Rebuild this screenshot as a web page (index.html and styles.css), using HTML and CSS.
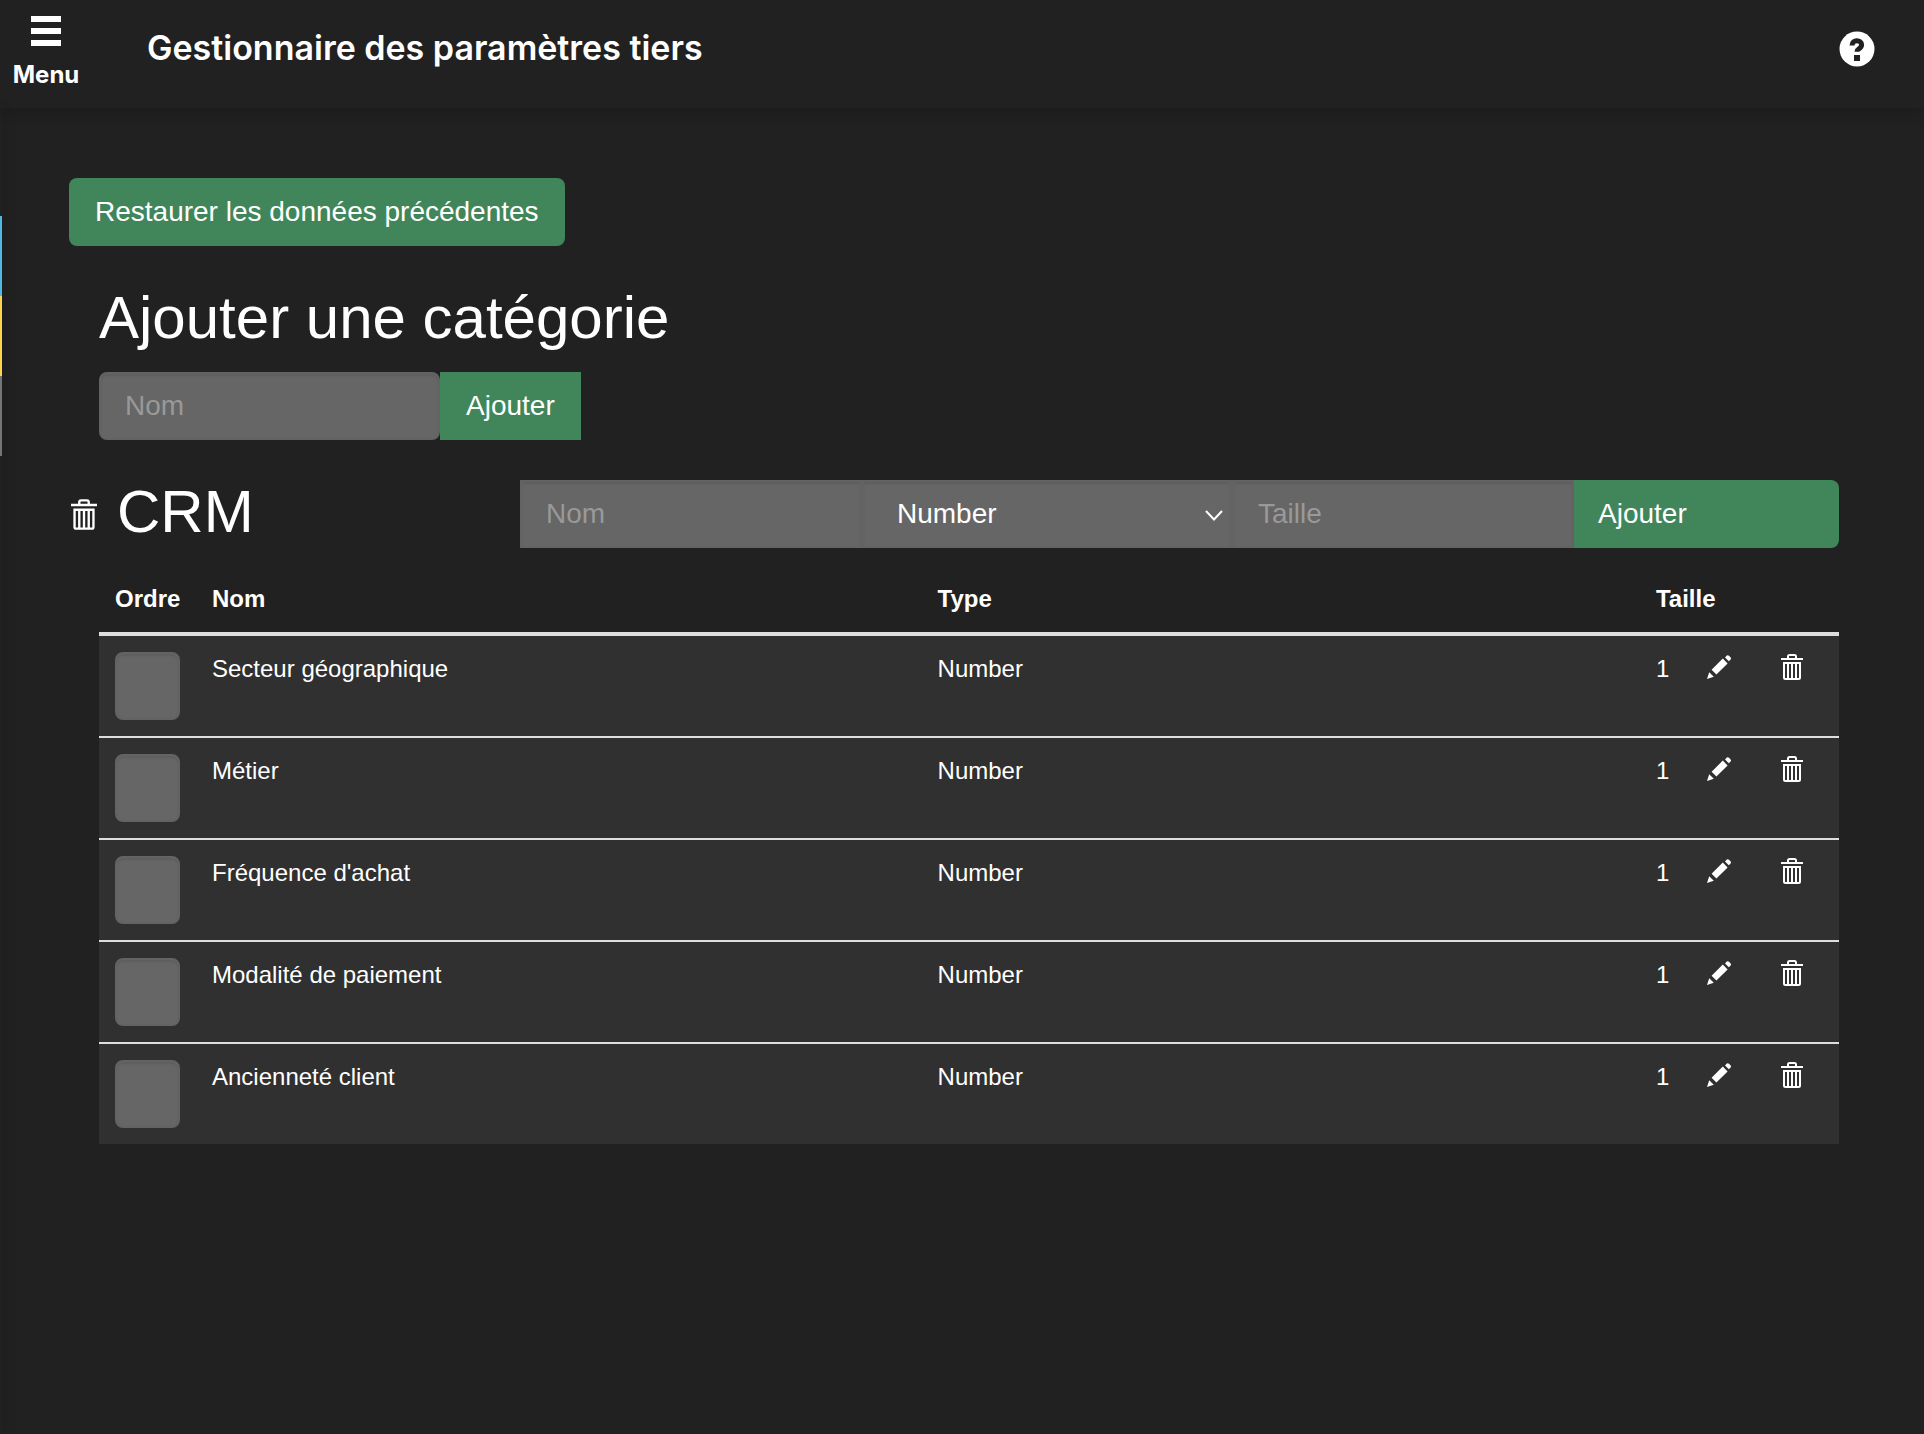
FILE: index.html
```html
<!DOCTYPE html>
<html lang="fr">
<head>
<meta charset="utf-8">
<meta name="viewport" content="width=device-width, initial-scale=1">
<title>Gestionnaire des paramètres tiers</title>
<link rel="stylesheet" href="styles.css">
</head>
<body>
<svg class="sprite" aria-hidden="true">
  <symbol id="trash" viewBox="0 0 22 26">
    <path d="M7 4V2.500Q7 1 8.500 1h5Q15 1 15 2.500V4M0 5h22M3 9h16v14.500q0 1.500-1.500 1.500h-13Q3 25 3 23.500zM7 9v16M11 9v16M15 9v16" fill="none" stroke="currentColor" stroke-width="2"/>
  </symbol>
  <symbol id="pencil" viewBox="0 0 24 24">
    <path d="M18 2.400 19.800.6q1-1 2.200.2l1.400 1.400q1.200 1.200.2 2.200l-1.800 1.800zM15.800 3.600l4.800 4.800L9.400 19.600 4.600 14.800zM2.200 17.200 6.800 21.800 0 24z" fill="currentColor"/>
  </symbol>
</svg>

<header class="topbar">
  <button class="menu" type="button">
    <svg width="30" height="30" viewBox="0 0 30 30" aria-hidden="true"><path d="M0 0h30v6H0zM0 12h30v6H0zM0 24h30v6H0z" fill="currentColor"/></svg>
    <span>Menu</span>
  </button>
  <h1 class="title">Gestionnaire des paramètres tiers</h1>
  <button class="help" type="button" aria-label="Aide">
    <svg width="36" height="36" viewBox="0 0 36 36" aria-hidden="true"><circle cx="18" cy="18" r="17.500" fill="#fff"/><path d="M13 14.500C13 8 22.600 8.300 22.600 13.800c0 4.200-4.600 3.400-4.600 6.900" fill="none" stroke="#212121" stroke-width="5"/><path d="M15 24h6v6h-6z" fill="#212121"/></svg>
  </button>
</header>

<aside class="drawer" aria-hidden="true">
  <div class="tab blue"></div>
  <div class="tab yellow"></div>
  <div class="tab grey"></div>
</aside>

<main class="content">
  <button class="btn rounded" type="button">Restaurer les données précédentes</button>

  <section class="new-category">
    <h2 class="heading">Ajouter une catégorie</h2>
    <form class="inline-form">
      <input class="field rounded" type="text" placeholder="Nom" aria-label="Nom de la catégorie">
      <button class="btn" type="button">Ajouter</button>
    </form>
  </section>

  <section class="category">
    <div class="category-head">
      <button class="icon-btn" type="button" aria-label="Supprimer la catégorie"><svg class="trash-large"><use href="#trash"/></svg></button>
      <h2 class="heading">CRM</h2>
      <form class="param-form">
        <input class="field" type="text" placeholder="Nom" aria-label="Nom">
        <div class="select-wrap">
          <select class="field" aria-label="Type"><option>Number</option></select>
          <svg class="chevron" viewBox="0 0 18 11" aria-hidden="true"><path d="m1 1 8 8.500L17 1" fill="none" stroke="currentColor" stroke-width="2"/></svg>
        </div>
        <input class="field" type="text" placeholder="Taille" aria-label="Taille">
        <button class="btn submit" type="button">Ajouter</button>
      </form>
    </div>

    <table class="params">
      <colgroup><col class="c-order"><col class="c-name"><col class="c-type"><col class="c-size"><col class="c-edit"><col class="c-del"></colgroup>
      <thead>
        <tr><th>Ordre</th><th>Nom</th><th>Type</th><th colspan="3">Taille</th></tr>
      </thead>
      <tbody>
        <tr><td><input class="field rounded order" type="text" aria-label="Ordre"></td><td>Secteur géographique</td><td>Number</td><td>1</td>
          <td><button class="icon-btn" type="button" aria-label="Modifier"><svg class="pencil"><use href="#pencil"/></svg></button></td>
          <td><button class="icon-btn" type="button" aria-label="Supprimer"><svg class="trash"><use href="#trash"/></svg></button></td></tr>
        <tr><td><input class="field rounded order" type="text" aria-label="Ordre"></td><td>Métier</td><td>Number</td><td>1</td>
          <td><button class="icon-btn" type="button" aria-label="Modifier"><svg class="pencil"><use href="#pencil"/></svg></button></td>
          <td><button class="icon-btn" type="button" aria-label="Supprimer"><svg class="trash"><use href="#trash"/></svg></button></td></tr>
        <tr><td><input class="field rounded order" type="text" aria-label="Ordre"></td><td>Fréquence d'achat</td><td>Number</td><td>1</td>
          <td><button class="icon-btn" type="button" aria-label="Modifier"><svg class="pencil"><use href="#pencil"/></svg></button></td>
          <td><button class="icon-btn" type="button" aria-label="Supprimer"><svg class="trash"><use href="#trash"/></svg></button></td></tr>
        <tr><td><input class="field rounded order" type="text" aria-label="Ordre"></td><td>Modalité de paiement</td><td>Number</td><td>1</td>
          <td><button class="icon-btn" type="button" aria-label="Modifier"><svg class="pencil"><use href="#pencil"/></svg></button></td>
          <td><button class="icon-btn" type="button" aria-label="Supprimer"><svg class="trash"><use href="#trash"/></svg></button></td></tr>
        <tr><td><input class="field rounded order" type="text" aria-label="Ordre"></td><td>Ancienneté client</td><td>Number</td><td>1</td>
          <td><button class="icon-btn" type="button" aria-label="Modifier"><svg class="pencil"><use href="#pencil"/></svg></button></td>
          <td><button class="icon-btn" type="button" aria-label="Supprimer"><svg class="trash"><use href="#trash"/></svg></button></td></tr>
      </tbody>
    </table>
  </section>
</main>
</body>
</html>
```
FILE: styles.css
```css
* {
  box-sizing: border-box;
}

body {
  margin: 0;
  min-height: 100vh;
  background: #212121;
  color: #fff;
  font: 24px/34px "Liberation Sans", Arial, sans-serif;
}

button,
input,
select {
  margin: 0;
  border: 0;
  color: inherit;
  font: inherit;
}

.sprite {
  position: absolute;
  width: 0;
  height: 0;
}

/* Top bar */
.topbar {
  display: flex;
  align-items: flex-start;
  height: 108px;
  padding: 0 49px 0 0;
  box-shadow: 0 0 16px rgba(0, 0, 0, 0.3);
}

.menu {
  display: flex;
  flex-direction: column;
  align-items: center;
  gap: 12px;
  width: 92px;
  padding: 16px 0 0;
  background: none;
  font: 700 24px/34px Inter, sans-serif;
}

.title {
  flex: 1;
  margin: 0 0 0 55px;
  padding-top: 24px;
  font: 600 34px/48px Inter, sans-serif;
}

.help {
  display: flex;
  padding: 31px 0 0;
  background: none;
}

/* Closed drawer: only its edge shows */
.drawer {
  position: absolute;
  top: 108px;
  bottom: 0;
  left: 0;
  width: 2px;
  padding-top: 108px;
  box-shadow: 0 0 12px rgba(0, 0, 0, 0.4);
}

.tab {
  height: 80px;
}

.blue {
  background: #4fb9e3;
}

.yellow {
  background: #ffd54f;
}

.grey {
  background: #757575;
}

/* Controls */
.btn {
  height: 68px;
  padding: 0 26px;
  background: #41865b;
  font-size: 28px;
  white-space: nowrap;
}

.field {
  width: 100%;
  height: 68px;
  padding: 0 24px;
  border: 2px solid #636363;
  border-radius: 0;
  background: #666;
  box-shadow: inset 0 2px 2px rgba(0, 0, 0, 0.08);
  font-size: 28px;
  appearance: none;
}

.field::placeholder {
  color: #999;
  opacity: 1;
}

.rounded {
  border-radius: 8px;
}

.icon-btn {
  display: block;
  padding: 0;
  background: none;
}

.icon-btn svg {
  display: block;
}

.trash {
  width: 22px;
  height: 26px;
}

.trash-large {
  width: 26px;
  height: 31px;
}

.pencil {
  width: 24px;
  height: 24px;
}

/* Page content */
.content {
  padding: 70px 85px 40px 69px;
}

.heading {
  margin: 0;
  font-size: 60px;
  font-weight: 400;
  line-height: 72px;
}

.new-category {
  padding: 36px 0 0 30px;
}

.inline-form {
  display: flex;
  margin-top: 18px;
}

.inline-form .field {
  width: 341px;
}

.category {
  padding-top: 40px;
}

.category-head {
  display: flex;
  align-items: center;
  gap: 20px;
  padding-left: 2px;
}

.category-head .heading {
  padding-bottom: 4px;
  line-height: 64px;
}

.param-form {
  display: grid;
  grid-template-columns: 342fr 370fr 342fr 265fr;
  flex: 0 1 1319px;
  margin-left: auto;
}

.select-wrap {
  position: relative;
}

.select-wrap .field {
  padding: 0 33px;
}

.chevron {
  position: absolute;
  top: 30px;
  right: 9px;
  width: 18px;
  height: 11px;
  pointer-events: none;
}

.submit {
  padding: 0 24px;
  border-radius: 0 8px 8px 0;
  text-align: left;
}

/* Parameter table */
.params {
  width: calc(100% - 30px);
  margin: 18px 0 0 30px;
  border-collapse: separate;
  border-spacing: 0;
  table-layout: fixed;
}

.c-order {
  width: 97px;
}

.c-name {
  width: 41.7%;
}

.c-size {
  width: 51px;
}

.c-edit {
  width: 74px;
}

.c-del {
  width: 74px;
}

.params th {
  height: 70px;
  padding: 16px;
  border-bottom: 4px solid #dedede;
  font-weight: 700;
  text-align: left;
}

.params td {
  padding: 16px;
  background: #303030;
  vertical-align: top;
}

.params tr + tr td {
  border-top: 2px solid #dedede;
}

.params .order {
  display: block;
  width: 65px;
}

.params .icon-btn {
  display: flex;
  align-items: center;
  height: 34px;
  padding-bottom: 4px;
}
```
